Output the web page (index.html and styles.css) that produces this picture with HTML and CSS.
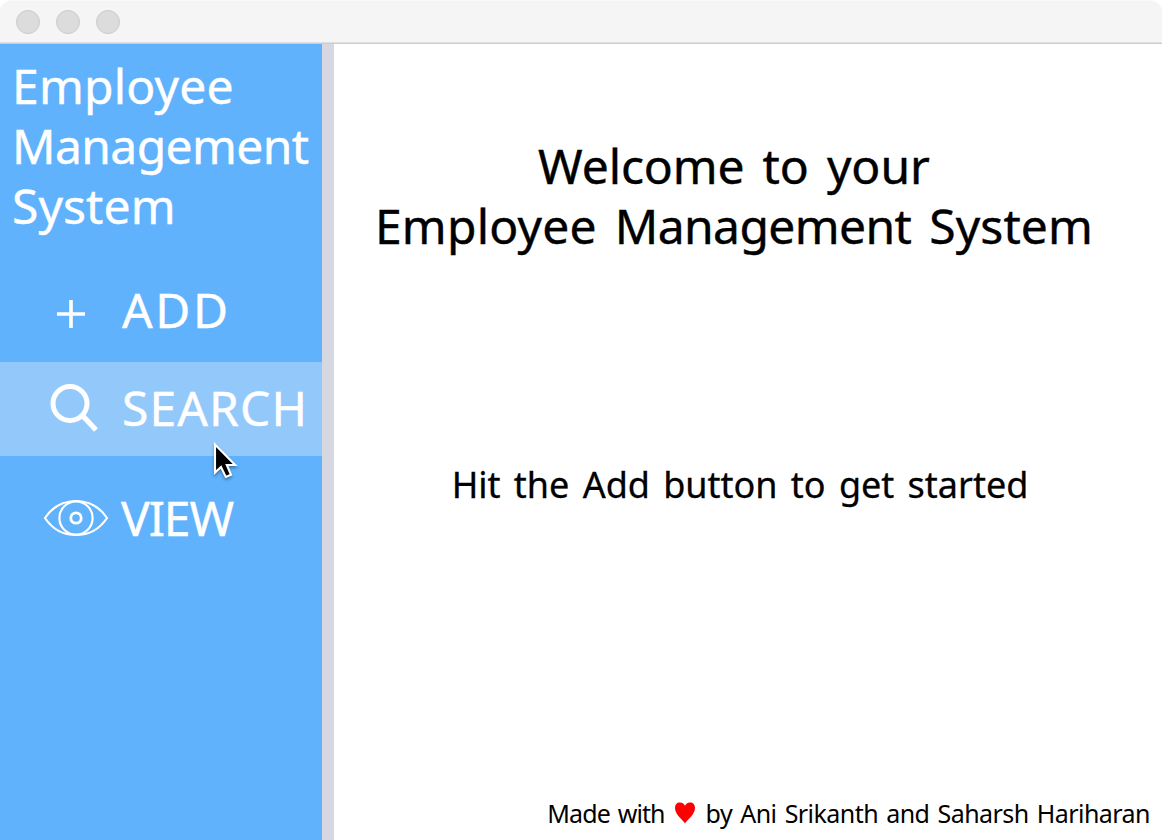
FILE: index.html
```html
<!DOCTYPE html>
<html lang="en">
<head>
<meta charset="utf-8">
<title>Employee Management System</title>
<link rel="stylesheet" href="styles.css">
</head>
<body>
<div class="window">
  <header class="titlebar"><span class="dot"></span><span class="dot"></span><span class="dot"></span></header>
  <div class="content">
    <aside class="sidebar">
      <h1 class="brand"><span class="employee">Employee</span><br><span class="management">Management</span><br><span class="system">System</span></h1>
      <nav class="menu">
        <a class="item add">
          <svg class="icon" width="122" height="94" viewBox="0 0 122 94"><path d="M57 50H85M71 36V64" stroke="#fff" stroke-width="3.600" fill="none"/></svg>
          <span class="label">ADD</span>
        </a>
        <a class="item search">
          <svg class="icon" width="122" height="94" viewBox="0 0 122 94"><g fill="none" stroke="#fff" stroke-width="5"><circle cx="70" cy="41.500" r="17"/><path d="M82 53L96 68" stroke-width="5.200"/></g></svg>
          <span class="label">SEARCH</span>
        </a>
        <a class="item view">
          <svg class="icon" width="122" height="94" viewBox="0 0 122 94"><g fill="none" stroke="#fff" stroke-width="2.200"><path d="M45 46C53 34 64 29 76 29S99 34 107 46C99 58 88 63 76 63S53 58 45 46Z"/><circle cx="76" cy="46" r="16.600"/><circle cx="76" cy="46" r="5.200" stroke-width="2.800"/></g></svg>
          <span class="label">VIEW</span>
        </a>
      </nav>
    </aside>
    <div class="divider"></div>
    <main class="main">
      <h2 class="welcome"><span class="hello">Welcome</span> to your<br><span class="employee">Employee</span> <span class="management">Management</span> <span class="system">System</span></h2>
      <p class="hint">Hit the Add button to get started</p>
      <footer class="credit">
        <span class="made">Made with</span>
        <svg class="heart" width="20" height="22" viewBox="0 0 20 22"><path d="M10 21.500C8 17.500 0 13 0 6C0 2.500 1.800 .5 5 .5C7.500 .5 9.300 1.800 10 4C10.700 1.800 12.500 .5 15 .5C18.200 .5 20 2.500 20 6C20 13 12 17.500 10 21.500Z" fill="#f00"/></svg>
        <span>by Ani Srikanth and Saharsh Hariharan</span>
      </footer>
    </main>
  </div>
  <svg class="cursor" width="34" height="46" viewBox="0 0 34 46"><path d="M5 4.500V32.500L11 27L15.800 37L21 34.800L16.800 25H25.200Z" fill="#000" stroke="#fff" stroke-width="2.100"/></svg>
</div>
</body>
</html>
```
FILE: styles.css
```css
* { box-sizing: border-box; }
body { margin: 0; background: #fff; font-family: "Noto Sans", sans-serif; }
.window { position: relative; display: flex; flex-direction: column; width: 1162px; height: 840px; overflow: hidden; }
.titlebar { flex: none; display: flex; gap: 16px; height: 44px; padding: 9px 16px; background: #f5f5f5; border-top: 1px solid #f9f9f9; border-bottom: 1px solid #cdcdcd; box-shadow: inset 0 -1px #e0e0e0; border-radius: 12px 12px 0 0; }
.dot { width: 24px; height: 24px; border-radius: 50%; background: #dcdcdc; border: 1px solid #cacaca; }
.content { flex: 1; display: flex; min-height: 0; }
.sidebar { width: 322px; background: #60b2fc; color: #fff; white-space: nowrap; }
.divider { width: 12px; background: #d5d8e1; }
.brand, .welcome { margin: 0; font-size: 48px; line-height: 60px; font-weight: 400; -webkit-text-stroke: .4px currentColor; }
.brand { padding: 12px 0 0 12px; }
.hello { letter-spacing: -.1px; }
.employee { letter-spacing: .2px; }
.management { letter-spacing: -.6px; }
.system { letter-spacing: .1px; }
.menu { display: flex; flex-direction: column; margin-top: 28px; }
.item { display: flex; height: 94px; color: #fff; }
.icon { flex: none; display: block; }
.label { padding-top: 16px; font-size: 48px; line-height: 60px; -webkit-text-stroke: .4px currentColor; }
.add .label { letter-spacing: 2.700px; }
.search { background: #93c9fa; margin-top: 4px; }
.search .label { letter-spacing: 1.100px; }
.view { margin-top: 16px; }
.view .label { letter-spacing: -1.100px; margin-left: -1px; }
.main { flex: 1; display: flex; flex-direction: column; color: #000; white-space: nowrap; }
.welcome { padding-top: 92px; text-align: center; margin-right: 28px; word-spacing: 5.500px; }
.hint { margin: 204px 16px 0 0; font-size: 36px; line-height: 50px; text-align: center; word-spacing: 3.900px; -webkit-text-stroke: .3px currentColor; }
.credit { display: flex; margin-top: auto; padding-right: 12px; justify-content: flex-end; font-size: 25px; line-height: 34px; height: 44px; letter-spacing: -.55px; word-spacing: 2.200px; }
.made { letter-spacing: -.9px; }
.heart { margin: 6px 11px 0 10px; }
.cursor { position: absolute; left: 210px; top: 440px; filter: drop-shadow(0 2px 1.500px rgba(0, 0, 0, .35)); }
```
